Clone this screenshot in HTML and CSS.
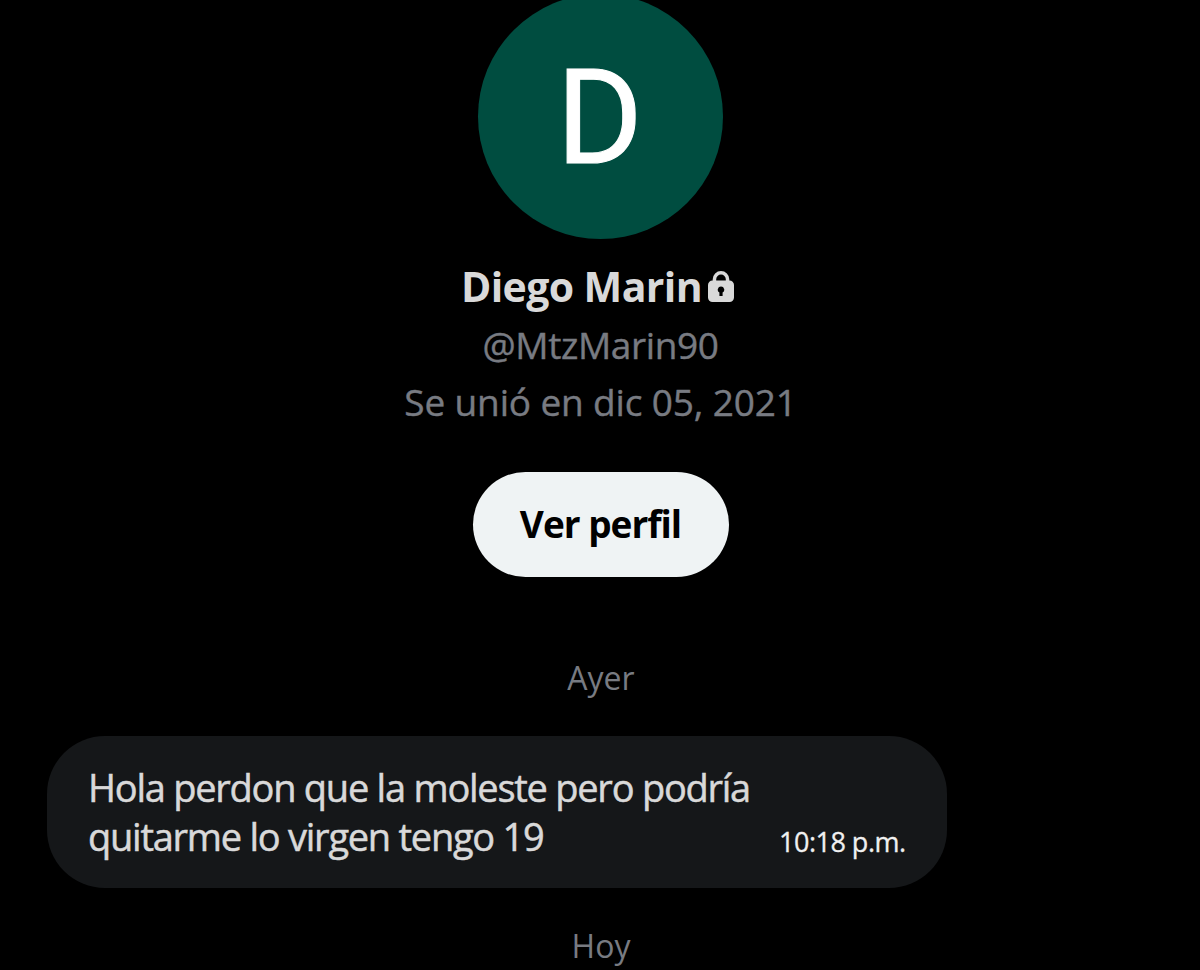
FILE: index.html
```
<!DOCTYPE html>
<html lang="es">
<head>
  <meta charset="UTF-8" />
  <meta name="viewport" content="width=device-width, initial-scale=1.0" />
  <title>Mensajes</title>
  <link rel="stylesheet" href="styles.css">
</head>
<body>

  <!-- Profile -->
  <div class="profile">
    <div class="avatar"><span>D</span></div>
    <h1 class="name">
      <span>Diego Marin</span>
      <svg class="lock" viewBox="0 0 26 32">
        <path fill-rule="evenodd" d="M4.700 9.500V8.300a8.300 8.300 0 0 1 16.600 0V9.500A4.500 4.500 0 0 1 26 14v12.500a4.500 4.500 0 0 1-4.500 4.500h-17A4.500 4.500 0 0 1 0 26.500V14A4.500 4.500 0 0 1 4.700 9.500ZM8.200 9.500h9.600V8.300a4.800 4.800 0 0 0-9.600 0ZM13 15.500a3.200 3.200 0 0 0-1.600 6v3.500h3.200v-3.500A3.200 3.200 0 0 0 13 15.500Z"/>
      </svg>
    </h1>
    <p class="handle">@MtzMarin90</p>
    <p class="joined">Se unió en dic 05, 2021</p>
    <button class="profile-btn">Ver perfil</button>
  </div>

  <!-- Conversation -->
  <div class="chat">
    <div class="day">Ayer</div>
    <div class="message">
      <p class="text">Hola perdon que la moleste pero podría<br>quitarme lo virgen tengo 19</p>
      <span class="time">10:18 p.m.</span>
    </div>
    <div class="day">Hoy</div>
  </div>

</body>
</html>
```
FILE: styles.css
```
* {
  box-sizing: border-box;
}

body {
  margin: 0;
  height: 970px;
  overflow: hidden;
  background: #000;
  color: #d9d9d9;
  font-family: 'Open Sans', 'Noto Sans', sans-serif;
}

p,
h1 {
  margin: 0;
  white-space: nowrap;
}

.profile {
  display: flex;
  flex-direction: column;
  align-items: center;
  padding-left: 1px;
}

.avatar {
  display: flex;
  align-items: center;
  justify-content: center;
  width: 245px;
  height: 245px;
  margin-top: -6px;
  padding: 4px 2px 0 0;
  border-radius: 50%;
  background: #004d40;
  color: #fff;
  font-family: Roboto, sans-serif;
  font-size: 132px;
  line-height: 241px;
  -webkit-text-stroke: 1px #fff;
}

.name {
  display: flex;
  align-items: center;
  gap: 6px;
  height: 60px;
  margin-top: 17px;
  padding-right: 6px;
  font-size: 41px;
  font-weight: 700;
  line-height: 60px;
  letter-spacing: -0.6px;
}

.lock {
  width: 26px;
  height: 32px;
  margin-top: 2px;
  fill: #d9d9d9;
}

.handle,
.joined {
  color: #787b82;
  font-size: 37px;
  line-height: 57px;
  -webkit-text-stroke: 0.4px #787b82;
}

.handle {
  letter-spacing: -0.4px;
}

.joined {
  letter-spacing: -0.15px;
}

.profile-btn {
  width: 256px;
  height: 105px;
  margin-top: 42px;
  padding: 0 0 2px;
  border: none;
  border-radius: 53px;
  background: #eff3f4;
  color: #000;
  font-family: inherit;
  font-size: 37px;
  font-weight: 700;
  letter-spacing: -1px;
}

.chat {
  display: flex;
  flex-direction: column;
  padding: 78px 47px 0;
}

.day {
  height: 46px;
  color: #787b82;
  font-size: 32px;
  line-height: 46px;
  text-align: center;
  padding-left: 2px;
}

.message {
  display: flex;
  align-items: flex-end;
  justify-content: space-between;
  width: 900px;
  height: 152px;
  margin: 35px 0 35px;
  padding: 0 42px 27px 41px;
  border-radius: 58px;
  background: #151719;
}

.text {
  font-size: 38px;
  line-height: 49px;
  letter-spacing: -1.25px;
  -webkit-text-stroke: 0.5px #d9d9d9;
}

.time {
  width: 126px;
  color: #f0f0f0;
  font-size: 27px;
  line-height: 38px;
  letter-spacing: -0.5px;
  white-space: nowrap;
  -webkit-text-stroke: 0.3px #f0f0f0;
}
```
